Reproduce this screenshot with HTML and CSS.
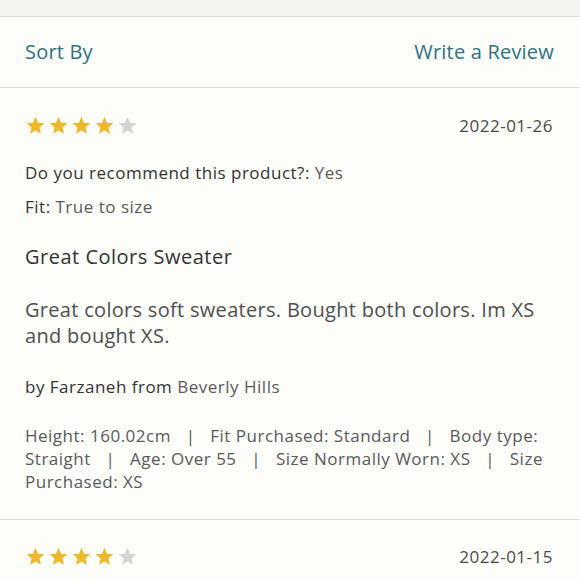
FILE: index.html
```html
<!DOCTYPE html>
<html>
<head>
<meta charset="utf-8">
<link rel="stylesheet" href="styles.css">
</head>
<body>
<div class="topbar"></div>
<div class="toolbar">
  <span class="link">Sort By</span>
  <span class="link">Write a Review</span>
</div>
<div class="review">
  <div class="meta-row">
    <div class="stars">
      <svg class="star on" viewBox="0 0 24 24"><path d="M12 2l2.9 6.9 7.1.6-5.4 4.8 1.6 7.2L12 17.7l-6.2 3.8 1.6-7.2L2 9.5l7.1-.6z"/></svg>
      <svg class="star on" viewBox="0 0 24 24"><path d="M12 2l2.9 6.9 7.1.6-5.4 4.8 1.6 7.2L12 17.7l-6.2 3.8 1.6-7.2L2 9.5l7.1-.6z"/></svg>
      <svg class="star on" viewBox="0 0 24 24"><path d="M12 2l2.9 6.9 7.1.6-5.4 4.8 1.6 7.2L12 17.7l-6.2 3.8 1.6-7.2L2 9.5l7.1-.6z"/></svg>
      <svg class="star on" viewBox="0 0 24 24"><path d="M12 2l2.9 6.9 7.1.6-5.4 4.8 1.6 7.2L12 17.7l-6.2 3.8 1.6-7.2L2 9.5l7.1-.6z"/></svg>
      <svg class="star off" viewBox="0 0 24 24"><path d="M12 2l2.9 6.9 7.1.6-5.4 4.8 1.6 7.2L12 17.7l-6.2 3.8 1.6-7.2L2 9.5l7.1-.6z"/></svg>
    </div>
    <span class="date">2022-01-26</span>
  </div>
  <p class="attr attr-first"><span class="label">Do you recommend this product?:</span> Yes</p>
  <p class="attr"><span class="label">Fit:</span> True to size</p>
  <h3 class="title">Great Colors Sweater</h3>
  <p class="body">Great colors soft sweaters. Bought both colors. Im XS and bought XS.</p>
  <p class="author"><span class="label">by Farzaneh from</span> Beverly Hills</p>
  <p class="details">Height: 160.02cm &nbsp;&nbsp;|&nbsp;&nbsp; Fit Purchased: Standard &nbsp;&nbsp;|&nbsp;&nbsp; Body type: Straight &nbsp;&nbsp;|&nbsp;&nbsp; Age: Over 55 &nbsp;&nbsp;|&nbsp;&nbsp; Size Normally Worn: XS &nbsp;&nbsp;|&nbsp;&nbsp; Size Purchased: XS</p>
</div>
<div class="review">
  <div class="meta-row">
    <div class="stars">
      <svg class="star on" viewBox="0 0 24 24"><path d="M12 2l2.9 6.9 7.1.6-5.4 4.8 1.6 7.2L12 17.7l-6.2 3.8 1.6-7.2L2 9.5l7.1-.6z"/></svg>
      <svg class="star on" viewBox="0 0 24 24"><path d="M12 2l2.9 6.9 7.1.6-5.4 4.8 1.6 7.2L12 17.7l-6.2 3.8 1.6-7.2L2 9.5l7.1-.6z"/></svg>
      <svg class="star on" viewBox="0 0 24 24"><path d="M12 2l2.9 6.9 7.1.6-5.4 4.8 1.6 7.2L12 17.7l-6.2 3.8 1.6-7.2L2 9.5l7.1-.6z"/></svg>
      <svg class="star on" viewBox="0 0 24 24"><path d="M12 2l2.9 6.9 7.1.6-5.4 4.8 1.6 7.2L12 17.7l-6.2 3.8 1.6-7.2L2 9.5l7.1-.6z"/></svg>
      <svg class="star off" viewBox="0 0 24 24"><path d="M12 2l2.9 6.9 7.1.6-5.4 4.8 1.6 7.2L12 17.7l-6.2 3.8 1.6-7.2L2 9.5l7.1-.6z"/></svg>
    </div>
    <span class="date">2022-01-15</span>
  </div>
</div>
</body>
</html>
```
FILE: styles.css
```css
html, body {
  margin: 0;
  padding: 0;
  background: #fdfdfa;
  font-family: "Open Sans", "Noto Sans", sans-serif;
  color: #555;
  overflow: hidden;
}
.topbar {
  height: 16px;
  background: #f5f4f1;
  border-bottom: 1px solid #dcdcda;
}
.toolbar {
  height: 70px;
  display: flex;
  align-items: center;
  justify-content: space-between;
  padding: 0 26px 0 25px;
  border-bottom: 1px solid #dcdcda;
}
.link {
  color: #2f7280;
  font-size: 20px;
  letter-spacing: 0.2px;
  padding-bottom: 1px;
}
.review {
  padding: 26px 27px 0 25px;
  border-bottom: 1px solid #dcdcda;
}
.review:last-child {
  border-bottom: none;
  padding-top: 25px;
}
.meta-row {
  display: flex;
  justify-content: space-between;
  align-items: center;
  height: 22px;
}
.stars {
  display: flex;
  gap: 2px;
}
.star {
  width: 21px;
  height: 21px;
}
.star.on { fill: #ecb92c; }
.star.off { fill: #d4d4d2; }
.date {
  font-size: 17px;
  color: #4a4a4a;
  letter-spacing: 0.5px;
}
.attr {
  margin: 12px 0 0;
  font-size: 17px;
  line-height: 22px;
  letter-spacing: 0.5px;
  color: #5a5a5a;
}
.attr-first {
  margin-top: 26px;
}
.label {
  color: #333;
  font-weight: 500;
}
.title {
  margin: 27px 0 0;
  font-size: 20px;
  font-weight: 500;
  color: #333;
  letter-spacing: 0.5px;
  line-height: 24px;
}
.body {
  margin: 28px 0 0;
  font-size: 20px;
  line-height: 26px;
  letter-spacing: 0.3px;
  color: #4f4f4f;
}
.author {
  margin: 27px 0 0;
  font-size: 17px;
  line-height: 22px;
  letter-spacing: 0.5px;
  color: #5a5a5a;
}
.details {
  margin: 26px 0 0;
  padding-bottom: 26px;
  font-size: 17px;
  line-height: 23px;
  letter-spacing: 0.5px;
  color: #5a5a5a;
}
```
